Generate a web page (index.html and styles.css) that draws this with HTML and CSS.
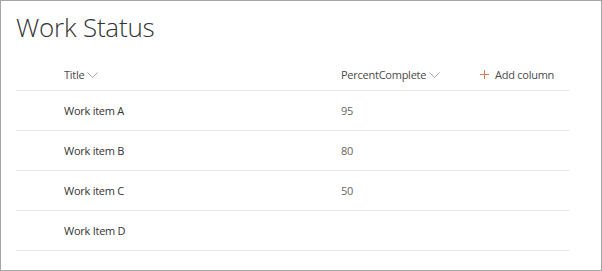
FILE: index.html
```html
<!DOCTYPE html>
<html>
<head>
<meta charset="utf-8">
<link rel="stylesheet" href="styles.css">
</head>
<body>
<div class="frame">
  <h1 class="page-title">Work Status</h1>
  <div class="list">
    <div class="row header">
      <div class="cell c-title"><span>Title</span><svg class="chev" width="11" height="6" viewBox="0 0 11 6"><path d="M0.5 0.5 L5.5 5.5 L10.5 0.5" fill="none" stroke="#a6a6a6" stroke-width="1"/></svg></div>
      <div class="cell c-pct"><span>PercentComplete</span><svg class="chev" width="11" height="6" viewBox="0 0 11 6"><path d="M0.5 0.5 L5.5 5.5 L10.5 0.5" fill="none" stroke="#a6a6a6" stroke-width="1"/></svg></div>
      <div class="cell c-add"><svg class="plus" width="9" height="9" viewBox="0 0 9 9"><path d="M4.5 0 V9 M0 4.5 H9" fill="none" stroke="#e4784c" stroke-width="1"/></svg><span>Add column</span></div>
    </div>
    <div class="row"><div class="cell c-title name">Work item A</div><div class="cell c-pct num">95</div><div class="cell c-add"></div></div>
    <div class="row"><div class="cell c-title name">Work item B</div><div class="cell c-pct num">80</div><div class="cell c-add"></div></div>
    <div class="row"><div class="cell c-title name">Work item C</div><div class="cell c-pct num">50</div><div class="cell c-add"></div></div>
    <div class="row"><div class="cell c-title name">Work Item D</div><div class="cell c-pct num"></div><div class="cell c-add"></div></div>
  </div>
</div>
</body>
</html>
```
FILE: styles.css
```css
html, body {
  margin: 0;
  padding: 0;
  background: #fff;
}
.frame {
  box-sizing: border-box;
  width: 602px;
  height: 271px;
  border: 1px solid #a6a6a6;
  font-family: "Open Sans", "Noto Sans", sans-serif;
  color: #333;
  overflow: hidden;
}
.page-title {
  margin: 0;
  padding: 6px 0 0 15px;
  height: 50px;
  box-sizing: border-box;
  font-size: 26px;
  font-weight: 300;
  line-height: 40px;
  color: #333;
  letter-spacing: -0.2px;
}
.list {
  margin-left: 15px;
  width: 554px;
  padding-top: 7px;
}
.row {
  box-sizing: border-box;
  display: grid;
  grid-template-columns: 325px 139px 1fr;
  height: 40px;
  border-bottom: 1px solid #edebe9;
  align-items: center;
  font-size: 11px;
  letter-spacing: -0.25px;
}
.row.header {
  height: 33px;
}
.cell {
  display: flex;
  align-items: center;
}
.c-title {
  padding-left: 48px;
}
.header .cell {
  color: #4a4a4a;
}
.chev {
  margin-left: 3px;
  margin-top: 1px;
}
.plus {
  margin-right: 6px;
}
.num {
  color: #666;
}
.name {
  color: #333;
}
```
